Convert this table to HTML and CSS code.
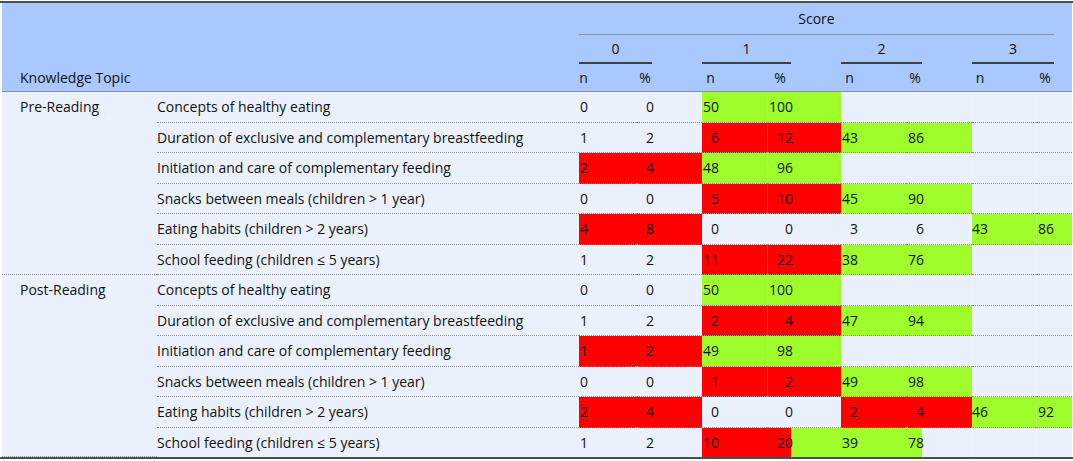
FILE: index.html
```html
<!DOCTYPE html>
<html lang="en">
<head>
<meta charset="utf-8">
<title>Knowledge scores</title>
<link rel="stylesheet" href="styles.css">
</head>
<body>
<div class="frame">
<table class="scores">
  <colgroup>
    <col class="c-group"><col class="c-topic">
    <col class="c-n0"><col class="c-p0">
    <col class="c-n1"><col class="c-p1">
    <col class="c-n2"><col class="c-p2">
    <col class="c-n3"><col class="c-p3">
  </colgroup>
  <thead>
    <tr class="h1">
      <th class="kt" colspan="2" rowspan="3"><span>Knowledge Topic</span></th>
      <th class="score" colspan="8"><div class="score-line">Score</div></th>
    </tr>
    <tr class="h2">
      <th colspan="2"><div class="grp-line">0</div></th>
      <th colspan="2"><div class="grp-line">1</div></th>
      <th colspan="2"><div class="grp-line">2</div></th>
      <th colspan="2" class="last"><div class="grp-line">3</div></th>
    </tr>
    <tr class="h3">
      <th><div class="lbl">n</div></th><th><div class="lbl">%</div></th>
      <th><div class="lbl">n</div></th><th><div class="lbl">%</div></th>
      <th><div class="lbl">n</div></th><th><div class="lbl">%</div></th>
      <th><div class="lbl">n</div></th><th class="last"><div class="lbl">%</div></th>
    </tr>
  </thead>
  <tbody>
    <tr>
      <td class="group" rowspan="6">Pre-Reading</td>
      <td class="topic">Concepts of healthy eating</td>
      <td><div class="v">0</div></td><td><div class="v">0</div></td>
      <td class="g"><div class="v">50</div></td><td class="g sep"><div class="v">100</div></td>
      <td></td><td></td>
      <td class="sep"></td><td class="last sep"></td>
    </tr>
    <tr>
      <td class="topic">Duration of exclusive and complementary breastfeeding</td>
      <td><div class="v">1</div></td><td><div class="v">2</div></td>
      <td class="r"><div class="v">6</div></td><td class="r sep"><div class="v">12</div></td>
      <td class="g"><div class="v">43</div></td><td class="g"><div class="v">86</div></td>
      <td class="sep"></td><td class="last sep"></td>
    </tr>
    <tr>
      <td class="topic">Initiation and care of complementary feeding</td>
      <td class="r"><div class="v">2</div></td><td class="r"><div class="v">4</div></td>
      <td class="g"><div class="v">48</div></td><td class="g sep"><div class="v">96</div></td>
      <td></td><td></td>
      <td class="sep"></td><td class="last sep"></td>
    </tr>
    <tr>
      <td class="topic">Snacks between meals (children &gt; 1 year)</td>
      <td><div class="v">0</div></td><td><div class="v">0</div></td>
      <td class="r"><div class="v">5</div></td><td class="r sep"><div class="v">10</div></td>
      <td class="g"><div class="v">45</div></td><td class="g"><div class="v">90</div></td>
      <td class="sep"></td><td class="last sep"></td>
    </tr>
    <tr>
      <td class="topic">Eating habits (children &gt; 2 years)</td>
      <td class="r"><div class="v">4</div></td><td class="r"><div class="v">8</div></td>
      <td><div class="v">0</div></td><td><div class="v">0</div></td>
      <td><div class="v">3</div></td><td><div class="v">6</div></td>
      <td class="g"><div class="v">43</div></td><td class="g last sep"><div class="v">86</div></td>
    </tr>
    <tr class="group-end">
      <td class="topic">School feeding (children ≤ 5 years)</td>
      <td><div class="v">1</div></td><td><div class="v">2</div></td>
      <td class="r"><div class="v">11</div></td><td class="r sep"><div class="v">22</div></td>
      <td class="g"><div class="v">38</div></td><td class="g"><div class="v">76</div></td>
      <td class="sep"></td><td class="last sep"></td>
    </tr>
    <tr>
      <td class="group" rowspan="6">Post-Reading</td>
      <td class="topic">Concepts of healthy eating</td>
      <td><div class="v">0</div></td><td><div class="v">0</div></td>
      <td class="g"><div class="v">50</div></td><td class="g sep"><div class="v">100</div></td>
      <td></td><td></td>
      <td class="sep"></td><td class="last sep"></td>
    </tr>
    <tr>
      <td class="topic">Duration of exclusive and complementary breastfeeding</td>
      <td><div class="v">1</div></td><td><div class="v">2</div></td>
      <td class="r"><div class="v">2</div></td><td class="r sep"><div class="v">4</div></td>
      <td class="g"><div class="v">47</div></td><td class="g"><div class="v">94</div></td>
      <td class="sep"></td><td class="last sep"></td>
    </tr>
    <tr>
      <td class="topic">Initiation and care of complementary feeding</td>
      <td class="r"><div class="v">1</div></td><td class="r"><div class="v">2</div></td>
      <td class="g"><div class="v">49</div></td><td class="g sep"><div class="v">98</div></td>
      <td></td><td></td>
      <td class="sep"></td><td class="last sep"></td>
    </tr>
    <tr>
      <td class="topic">Snacks between meals (children &gt; 1 year)</td>
      <td><div class="v">0</div></td><td><div class="v">0</div></td>
      <td class="r"><div class="v">1</div></td><td class="r sep"><div class="v">2</div></td>
      <td class="g"><div class="v">49</div></td><td class="g"><div class="v">98</div></td>
      <td class="sep"></td><td class="last sep"></td>
    </tr>
    <tr>
      <td class="topic">Eating habits (children &gt; 2 years)</td>
      <td class="r"><div class="v">2</div></td><td class="r"><div class="v">4</div></td>
      <td><div class="v">0</div></td><td><div class="v">0</div></td>
      <td class="r"><div class="v">2</div></td><td class="r"><div class="v">4</div></td>
      <td class="g"><div class="v">46</div></td><td class="g last sep"><div class="v">92</div></td>
    </tr>
    <tr class="last-row">
      <td class="topic">School feeding (children ≤ 5 years)</td>
      <td><div class="v">1</div></td><td><div class="v">2</div></td>
      <td class="r"><div class="v">10</div></td><td class="rg"><div class="v">20</div></td>
      <td class="g"><div class="v">39</div></td><td class="gx"><div class="v">78</div></td>
      <td class="sep"></td><td class="last sep"></td>
    </tr>
  </tbody>
</table>
</div>
</body>
</html>
```

FILE: styles.css
```css
html, body {
  margin: 0;
  padding: 0;
  background: #ffffff;
}

body {
  font-family: "Open Sans", "Noto Sans", "DejaVu Sans", sans-serif;
  font-size: 14px;
  color: #111111;
}

.frame {
  margin-top: 1px;
  width: 1073px;
  box-sizing: border-box;
  padding: 0 1px 0 2px;
  border-top: 2px solid #4d4d4d;
  border-bottom: 2px solid #4d4d4d;
}

.scores {
  width: 1070px;
  table-layout: fixed;
  border-collapse: separate;
  border-spacing: 0;
}

.c-group { width: 155px; }
.c-topic { width: 422px; }
.c-n0 { width: 57px; }
.c-p0 { width: 66px; }
.c-n1 { width: 65px; }
.c-p1 { width: 74px; }
.c-n2 { width: 65px; }
.c-p2 { width: 66px; }
.c-n3 { width: 64px; }
.c-p3 { width: 36px; }

th, td {
  padding: 0 48px 0 0;
  font-weight: 400;
  white-space: nowrap;
}

th.last, td.last {
  padding-right: 18px;
}

/* ---------- header ---------- */
thead th {
  background: #a9c8fd;
  vertical-align: top;
}

.kt {
  text-align: left;
  vertical-align: bottom !important;
  padding-left: 18px;
  padding-right: 0;
  border-bottom: 1px solid #7d8fae;
}

.kt span {
  display: block;
  line-height: 27px;
}

th.score {
  padding-right: 18px;
}

.score-line {
  line-height: 31px;
  border-bottom: 1px solid #7f92b3;
  text-align: center;
}

.h2 th {
  padding-right: 50px;
}

.h2 th.last {
  padding-right: 18px;
}

.grp-line {
  line-height: 27px;
  border-bottom: 2px solid #3a3f48;
  text-align: center;
}

.h3 th {
  border-bottom: 1px solid #7d8fae;
}

.lbl {
  line-height: 27px;
  text-align: center;
}

/* ---------- body ---------- */
tbody td {
  background: #eaf1fd;
  line-height: 29.5px;
  border-bottom: 1px dotted #8f949c;
  vertical-align: top;
}

tbody tr.last-row td {
  border-bottom: none;
}

td.group {
  padding-left: 18px;
  padding-right: 0;
  border-bottom: 1px dotted #8f949c;
}

td.topic {
  padding-right: 0;
}

.v {
  text-align: right;
}

td.r {
  background: #ff0000;
}

td.g {
  background: #9efd2a;
}

td.rg {
  background: linear-gradient(to right, #ff0000 0, #ff0000 24px, #9efd2a 24px, #9efd2a 100%);
}

td.gx {
  background: linear-gradient(to right, #9efd2a 0, #9efd2a 16px, #eaf1fd 16px, #eaf1fd 100%);
}

td.sep {
  box-shadow: inset 1px 0 0 rgba(255, 255, 255, 0.22);
}
```
